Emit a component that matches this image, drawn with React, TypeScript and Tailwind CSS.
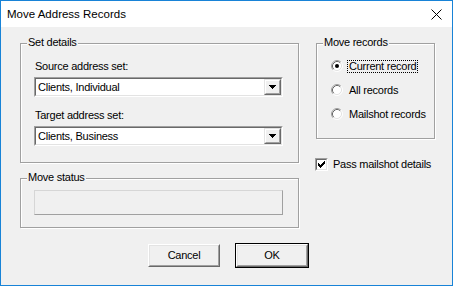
import React from "react";

function Group({ label, className, children }: { label: string; className: string; children?: React.ReactNode }) {
  return (
    <div className={"relative border border-[#a0a0a0] shadow-[inset_1px_1px_0_#fff,1px_1px_0_#fff] " + className}>
      <div className="absolute left-[6px] top-[-8px] px-[1px] bg-[#f0f0f0] leading-[13px] whitespace-nowrap">{label}</div>
      {children}
    </div>
  );
}

function Combo({ value }: { value: string }) {
  return (
    <div className="w-[249px] h-[20px] border border-t-[#a0a0a0] border-l-[#a0a0a0] border-b-white border-r-white">
      <div className="h-full border border-t-[#696969] border-l-[#696969] border-b-[#e3e3e3] border-r-[#e3e3e3] bg-white flex items-center">
        <div className="flex-1 pl-[2px] leading-[13px] whitespace-nowrap">{value}</div>
        <div className="w-[17px] h-[16px] border border-t-[#e3e3e3] border-l-[#e3e3e3] border-b-[#696969] border-r-[#696969]">
          <div className="h-full border border-t-white border-l-white border-b-[#a0a0a0] border-r-[#a0a0a0] bg-[#f0f0f0] flex items-center justify-center">
            <svg width="7" height="4" viewBox="0 0 7 4" shapeRendering="crispEdges">
              <path d="M0 0H7V1H6V2H5V3H4V4H3V3H2V2H1V1H0Z" fill="#000" />
            </svg>
          </div>
        </div>
      </div>
    </div>
  );
}

function Radio({ checked }: { checked?: boolean }) {
  return (
    <svg width="12" height="12" viewBox="0 0 12 12" className="shrink-0">
      <circle cx="6" cy="6" r="5" fill="#fff" />
      <path d="M2.11 9.89A5.5 5.5 0 0 1 9.89 2.11" fill="none" stroke="#a0a0a0" strokeWidth="1" />
      <path d="M2.82 9.18A4.5 4.5 0 0 1 9.18 2.82" fill="none" stroke="#696969" strokeWidth="1" />
      <path d="M9.89 2.11A5.5 5.5 0 0 1 2.11 9.89" fill="none" stroke="#ffffff" strokeWidth="1" />
      <path d="M9.18 2.82A4.5 4.5 0 0 1 2.82 9.18" fill="none" stroke="#e3e3e3" strokeWidth="1" />
      {checked && <circle cx="6" cy="6" r="2" fill="#000" />}
    </svg>
  );
}

function Button({ label, isDefault }: { label: string; isDefault?: boolean }) {
  const inner = (
    <div className="w-[72px] h-[23px] border border-t-white border-l-white border-b-[#696969] border-r-[#696969]">
      <div className="h-full border border-t-[#e3e3e3] border-l-[#e3e3e3] border-b-[#a0a0a0] border-r-[#a0a0a0] bg-[#f0f0f0] flex items-center justify-center leading-[13px]">
        {label}
      </div>
    </div>
  );
  if (isDefault) return <div className="border border-black">{inner}</div>;
  return inner;
}

export default function App() {
  return (
    <div className="w-[453px] h-[286px] border border-[#1883d7] bg-[#f0f0f0] flex flex-col font-['Liberation_Sans',Arial,sans-serif] text-[11px] tracking-[-0.25px] text-black overflow-hidden">
      <div className="h-[26px] bg-white flex items-center justify-between pl-[6px] pr-[10px] shrink-0">
        <div className="text-[11.5px] leading-[15px] tracking-normal">Move Address Records</div>
        <svg width="11" height="11" viewBox="0 0 11 11">
          <path d="M0.5 0.5L10.5 10.5M10.5 0.5L0.5 10.5" stroke="#000" strokeWidth="1" />
        </svg>
      </div>
      <div className="flex-1 pl-[19px] pt-[16px]">
        <div className="flex">
          <div className="w-[279px] flex flex-col">
            <Group label="Set details" className="h-[120px] pl-[13px] pt-[16px]">
              <div className="leading-[13px] pl-[1px]">Source address set:</div>
              <div className="mt-[4px]">
                <Combo value="Clients, Individual" />
              </div>
              <div className="leading-[13px] pl-[1px] mt-[12px]">Target address set:</div>
              <div className="mt-[4px]">
                <Combo value="Clients, Business" />
              </div>
            </Group>
            <Group label="Move status" className="h-[50px] mt-[15px] pl-[13px] pt-[11px]">
              <div className="w-[249px] h-[25px] border border-t-[#d6d6d6] border-l-[#d6d6d6] border-b-[#a0a0a0] border-r-[#a0a0a0]" />
            </Group>
          </div>
          <div className="ml-[17px] w-[119px] flex flex-col">
            <Group label="Move records" className="h-[96px] pl-[14px] pt-[10px]">
              <div className="h-[24px] flex items-center">
                <Radio checked />
                <div className="ml-[4px] border border-dotted border-black px-[1px] leading-[11px]">Current record</div>
              </div>
              <div className="h-[24px] flex items-center">
                <Radio />
                <div className="ml-[6px] leading-[13px]">All records</div>
              </div>
              <div className="h-[24px] flex items-center">
                <Radio />
                <div className="ml-[6px] leading-[13px]">Mailshot records</div>
              </div>
            </Group>
            <div className="mt-[19px] ml-[-1px] flex items-center">
              <div className="w-[13px] h-[13px] border border-t-[#a0a0a0] border-l-[#a0a0a0] border-b-white border-r-white shrink-0">
                <div className="h-full border border-t-[#696969] border-l-[#696969] border-b-[#e3e3e3] border-r-[#e3e3e3] bg-white flex items-center justify-center">
                  <svg width="7" height="7" viewBox="0 0 7 7" shapeRendering="crispEdges">
                    <path d="M0 2H1V3H2V4H3V3H4V2H5V1H6V0H7V3H6V4H5V5H4V6H3V7H2V6H1V5H0Z" fill="#000" />
                  </svg>
                </div>
              </div>
              <div className="ml-[5px] leading-[13px] whitespace-nowrap">Pass mailshot details</div>
            </div>
          </div>
        </div>
        <div className="mt-[15px] ml-[128px] flex items-center gap-[15px]">
          <Button label="Cancel" />
          <Button label="OK" isDefault />
        </div>
      </div>
    </div>
  );
}
